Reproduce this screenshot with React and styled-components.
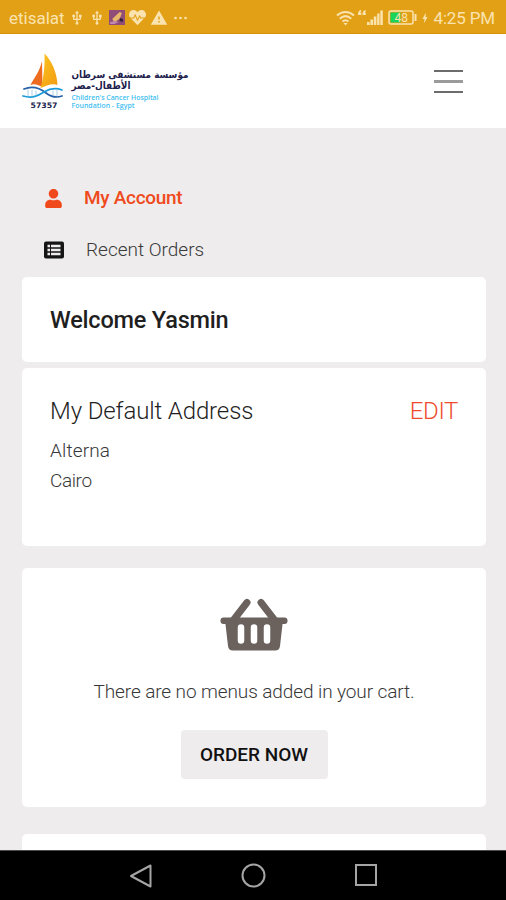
import React from "react";
import styled, { createGlobalStyle } from "styled-components";
import { FaHeartbeat, FaUser } from "react-icons/fa";
import { MdUsb, MdWarning, MdBolt } from "react-icons/md";

const GlobalStyle = createGlobalStyle`
  * {
    box-sizing: border-box;
  }

  body {
    margin: 0;
    overflow: hidden;
    font-family: Roboto, "Noto Sans", sans-serif;
  }
`;

const Screen = styled.div`
  height: 900px;
  display: flex;
  flex-direction: column;
  background: #eeeced;
`;

const StatusBar = styled.div`
  flex: none;
  height: 34px;
  padding: 2px 11px 0 9px;
  display: flex;
  align-items: center;
  justify-content: space-between;
  background: #e1a016;
  border-bottom: 1px solid #d9930a;
  color: #fbe3b0;
`;

const StatusGroup = styled.div`
  display: flex;
  align-items: center;
  gap: ${p => p.$gap || 0}px;

  svg {
    display: block;
    flex: none;
  }
`;

const StatusText = styled.span`
  font-size: 17px;
  line-height: 20px;
  letter-spacing: ${p => p.$track || 0}px;
  white-space: nowrap;
`;

const Header = styled.header`
  flex: none;
  height: 94px;
  padding: 17px 43px 0 20px;
  display: flex;
  justify-content: space-between;
  background: #fff;
`;

const LogoSvg = styled.svg`
  overflow: visible;
`;

const MenuButton = styled.button`
  width: 29px;
  height: 23px;
  margin: 19px 0 0;
  padding: 0;
  border: 0;
  background: none;
  display: flex;
  flex-direction: column;
  justify-content: space-between;
`;

const MenuLine = styled.span`
  width: 100%;
  height: ${p => (p.$soft ? 3 : 2)}px;
  background: ${p => (p.$soft ? "#9b9b9b" : "#6c6c6c")};
`;

const Content = styled.main`
  flex: 1;
  min-height: 0;
  overflow: hidden;
  padding: 44px 20px 0 22px;
`;

const NavList = styled.div`
  margin-bottom: 1px;
`;

const NavItem = styled.a`
  height: 52px;
  padding-left: 22px;
  display: flex;
  align-items: center;
  color: ${p => (p.$active ? "#f04a1c" : "#3a3a3a")};
`;

const NavIcon = styled.span`
  width: ${p => p.$width}px;
  display: flex;
`;

const Label = styled.span`
  font-size: ${p => p.$size || 19}px;
  font-weight: ${p => p.$weight || 300};
  line-height: 30px;
  letter-spacing: ${p => p.$track || 0}px;
  white-space: nowrap;
`;

const Card = styled.section`
  height: ${p => p.$height}px;
  margin-bottom: ${p => p.$gap || 0}px;
  padding: 28px;
  background: #fff;
  border-radius: 5px;
  color: #1f1f1f;
`;

const CardHead = styled.div`
  display: flex;
  justify-content: space-between;
  margin-bottom: 10px;
`;

const EditLink = styled.a`
  color: #ee4b2e;
`;

const AddressLine = styled.div`
  height: 30px;
  color: #383838;
`;

const CartCard = styled(Card)`
  display: flex;
  flex-direction: column;
  align-items: center;
  padding: 30px 0 0;

  svg {
    display: block;
    flex: none;
  }
`;

const CartMessage = styled.p`
  margin: 25px 0 22px;
  line-height: 30px;
  color: #383838;
`;

const OrderButton = styled.button`
  width: 147px;
  height: 49px;
  padding: 0;
  border: 0;
  border-radius: 4px;
  background: #eeeced;
  color: #111;
  font-family: inherit;
`;

const SystemNav = styled.nav`
  flex: none;
  height: 50px;
  display: flex;
  align-items: center;
  justify-content: center;
  gap: 88px;
  background: #000;
  border-top: 1px solid #4c4c4c;
`;

const Logo = () => (
  <LogoSvg width="172" height="62" viewBox="0 0 172 62">
    <defs>
      <linearGradient id="sail" x1="0" y1="0" x2="1" y2="1">
        <stop offset="0" stopColor="#fbc51f" />
        <stop offset="1" stopColor="#f39a12" />
      </linearGradient>
    </defs>
    <path d="M22 10C20 20 14 27 10.500 34c4-2 8 0 12 2z" fill="#ec6b1e" />
    <path d="M24.500 2.500C32 10 37 22 37.500 34c-6-2-11 1-17 3C24 26 25 13 24.500 2.500z" fill="url(#sail)" />
    <g fill="none" strokeLinecap="round">
      <path d="M4 38c10-4 17 0 22 4s10 5 16 3" stroke="#2762a8" strokeWidth="1.800" />
      <path d="M3 45c11 3 16-1 21-4s10-5 18-2" stroke="#1c9bd8" strokeWidth="1.800" />
      <path d="M8 39v6M12 39v6M16 40v4M33 40v4M37 39v6" stroke="#a9cfe6" strokeWidth="1" />
    </g>
    <g fontFamily="DejaVu Sans, sans-serif" fontWeight="700" fill="#20204c">
      <text x="10.500" y="56.500" fontSize="7.500" textLength="27" lengthAdjust="spacingAndGlyphs">57357</text>
      <text x="168.500" y="27" fontSize="10" direction="rtl" textLength="117" lengthAdjust="spacingAndGlyphs">مؤسسة مستشفى سرطان</text>
      <text x="110.500" y="38" fontSize="10" direction="rtl" textLength="59" lengthAdjust="spacingAndGlyphs">الأطفال-مصر</text>
    </g>
    <g fontFamily="Open Sans, sans-serif" fontWeight="600" fontSize="7" fill="#3fc0f0">
      <text x="51.500" y="49" textLength="87" lengthAdjust="spacingAndGlyphs">Children's Cancer Hospital</text>
      <text x="51.500" y="57" textLength="63" lengthAdjust="spacingAndGlyphs">Foundation - Egypt</text>
    </g>
  </LogoSvg>
);

const AppThumb = () => (
  <svg width="16" height="15" viewBox="0 0 15 15" preserveAspectRatio="none">
    <rect width="15" height="15" fill="#8f4d77" />
    <path d="M3 9l7-7 2 1-2 6-5 3z" fill="#e7b76c" />
    <path d="M1 12l5-1 3 1-4 2H1z" fill="#c08ab1" />
    <path d="M10 8l3 1v3l-3-1z" fill="#32213a" />
  </svg>
);

const Dots = () => (
  <svg width="15" height="4" viewBox="-2 0 15 4" fill="currentColor">
    <circle cx="1.500" cy="2" r="1.300" />
    <circle cx="6.500" cy="2" r="1.300" />
    <circle cx="11.500" cy="2" r="1.300" />
  </svg>
);

const Wifi = () => (
  <svg width="19" height="16" viewBox="0 0 19 16" fill="none" stroke="currentColor" strokeWidth="2">
    <path d="M1 5.500c5-4.700 12-4.700 17 0M3.800 8.700c3.600-3.300 7.800-3.300 11.400 0M6.500 11.600c2-1.700 4-1.700 6 0" />
    <path d="M7.500 13h4l-2 2.500z" fill="currentColor" stroke="none" />
  </svg>
);

const Signal = () => (
  <svg width="27" height="17" viewBox="0 0 27 17" fill="currentColor">
    <path d="M1 5c0-2 1-3.500 3-4l.3 1.200L3 3.500h1.300V6H1zM5.500 5c0-2 1-3.500 3-4l.3 1.200-1.300 1.300h1.300V6H5.500z" />
    <path d="M10 13h2.600v3H10zM13.400 10.500H16V16h-2.600zM16.800 7.500h2.600V16h-2.600zM20.200 4.500h2.300V16h-2.300zM23.300 1.500h2.500V16h-2.500z" />
  </svg>
);

const Battery = () => (
  <svg width="30" height="15" viewBox="-1 0 30 15">
    <rect x="1" y="1" width="24" height="13" rx="2" fill="none" stroke="#fbe3b0" strokeWidth="1.500" />
    <rect x="2.500" y="2.500" width="10" height="10" fill="#18d45a" />
    <path d="M27.500 4v7" stroke="#fbe3b0" strokeWidth="2" />
    <text x="13.300" y="12" fontSize="12" fontFamily="Roboto, sans-serif" fill="#fbe3b0" textAnchor="middle">48</text>
  </svg>
);

const OrdersIcon = () => (
  <svg width="20" height="18" viewBox="0 0 20 18">
    <rect y="0.500" width="20" height="17" rx="2" fill="#151515" />
    <path
      d="M3.500 5h2.500M7 5h9.500M3.500 9h2.500M7 9h9.500M3.500 13h2.500M7 13h9.500"
      stroke="#eeeced"
      strokeWidth="2.300"
    />
  </svg>
);

const Basket = () => (
  <svg width="68" height="54" viewBox="0 0 68 54">
    <path d="M27 4.500L13.500 22M41 4.500L54.500 22" stroke="#6b625e" strokeWidth="7" strokeLinecap="round" />
    <rect x="0.500" y="19.500" width="67" height="6.500" rx="3" fill="#6b625e" />
    <path d="M5 22h58l-3 26q-.5 4.500-5 4.500H13Q8.500 52.500 8 48z" fill="#6b625e" />
    <path d="M21 29.500v13M34 29.500v13M47 29.500v13" stroke="#fff" strokeWidth="6.500" strokeLinecap="round" />
  </svg>
);

const App = () => (
  <Screen>
    <GlobalStyle />
    <StatusBar>
      <StatusGroup $gap={4}>
        <StatusText>etisalat</StatusText>
        <StatusGroup $gap={4}>
          <MdUsb size={16} />
          <MdUsb size={16} />
        </StatusGroup>
        <AppThumb />
        <FaHeartbeat size={17} />
        <MdWarning size={18} />
        <Dots />
      </StatusGroup>
      <StatusGroup $gap={2}>
        <Wifi />
        <StatusGroup $gap={3}>
          <Signal />
          <Battery />
        </StatusGroup>
        <MdBolt size={12} />
        <StatusText $track={-0.15}>4:25 PM</StatusText>
      </StatusGroup>
    </StatusBar>
    <Header>
      <Logo />
      <MenuButton aria-label="Menu">
        <MenuLine />
        <MenuLine $soft />
        <MenuLine />
      </MenuButton>
    </Header>
    <Content>
      <NavList>
        <NavItem $active>
          <NavIcon $width={40}>
            <FaUser size={19} />
          </NavIcon>
          <Label $weight={500} $track={-0.3}>My Account</Label>
        </NavItem>
        <NavItem>
          <NavIcon $width={42}>
            <OrdersIcon />
          </NavIcon>
          <Label>Recent Orders</Label>
        </NavItem>
      </NavList>
      <Card $height={85} $gap={6}>
        <Label $size={23.5} $weight={500} $track={-0.2}>Welcome Yasmin</Label>
      </Card>
      <Card $height={178} $gap={22}>
        <CardHead>
          <Label $size={24} $track={-0.12}>My Default Address</Label>
          <EditLink>
            <Label $size={24} $track={-0.4}>EDIT</Label>
          </EditLink>
        </CardHead>
        <AddressLine>
          <Label $track={0.15}>Alterna</Label>
        </AddressLine>
        <AddressLine>
          <Label $track={-0.4}>Cairo</Label>
        </AddressLine>
      </Card>
      <CartCard $height={239} $gap={27}>
        <Basket />
        <CartMessage>
          <Label $track={-0.1}>There are no menus added in your cart.</Label>
        </CartMessage>
        <OrderButton>
          <Label $weight={500}>ORDER NOW</Label>
        </OrderButton>
      </CartCard>
      <Card $height={60} />
    </Content>
    <SystemNav>
      <svg width="24" height="26" viewBox="0 0 24 26" fill="none" stroke="#a5a5a5" strokeWidth="2">
        <path d="M22.500 2.500v21L3 13z" strokeLinejoin="round" />
      </svg>
      <svg width="26" height="26" viewBox="0 0 26 26" fill="none" stroke="#a5a5a5" strokeWidth="2">
        <circle cx="13.500" cy="12.500" r="11" />
      </svg>
      <svg width="24" height="26" viewBox="0 0 24 26" fill="none" stroke="#a5a5a5" strokeWidth="2">
        <rect x="2" y="2" width="20" height="20" />
      </svg>
    </SystemNav>
  </Screen>
);

export default App;
